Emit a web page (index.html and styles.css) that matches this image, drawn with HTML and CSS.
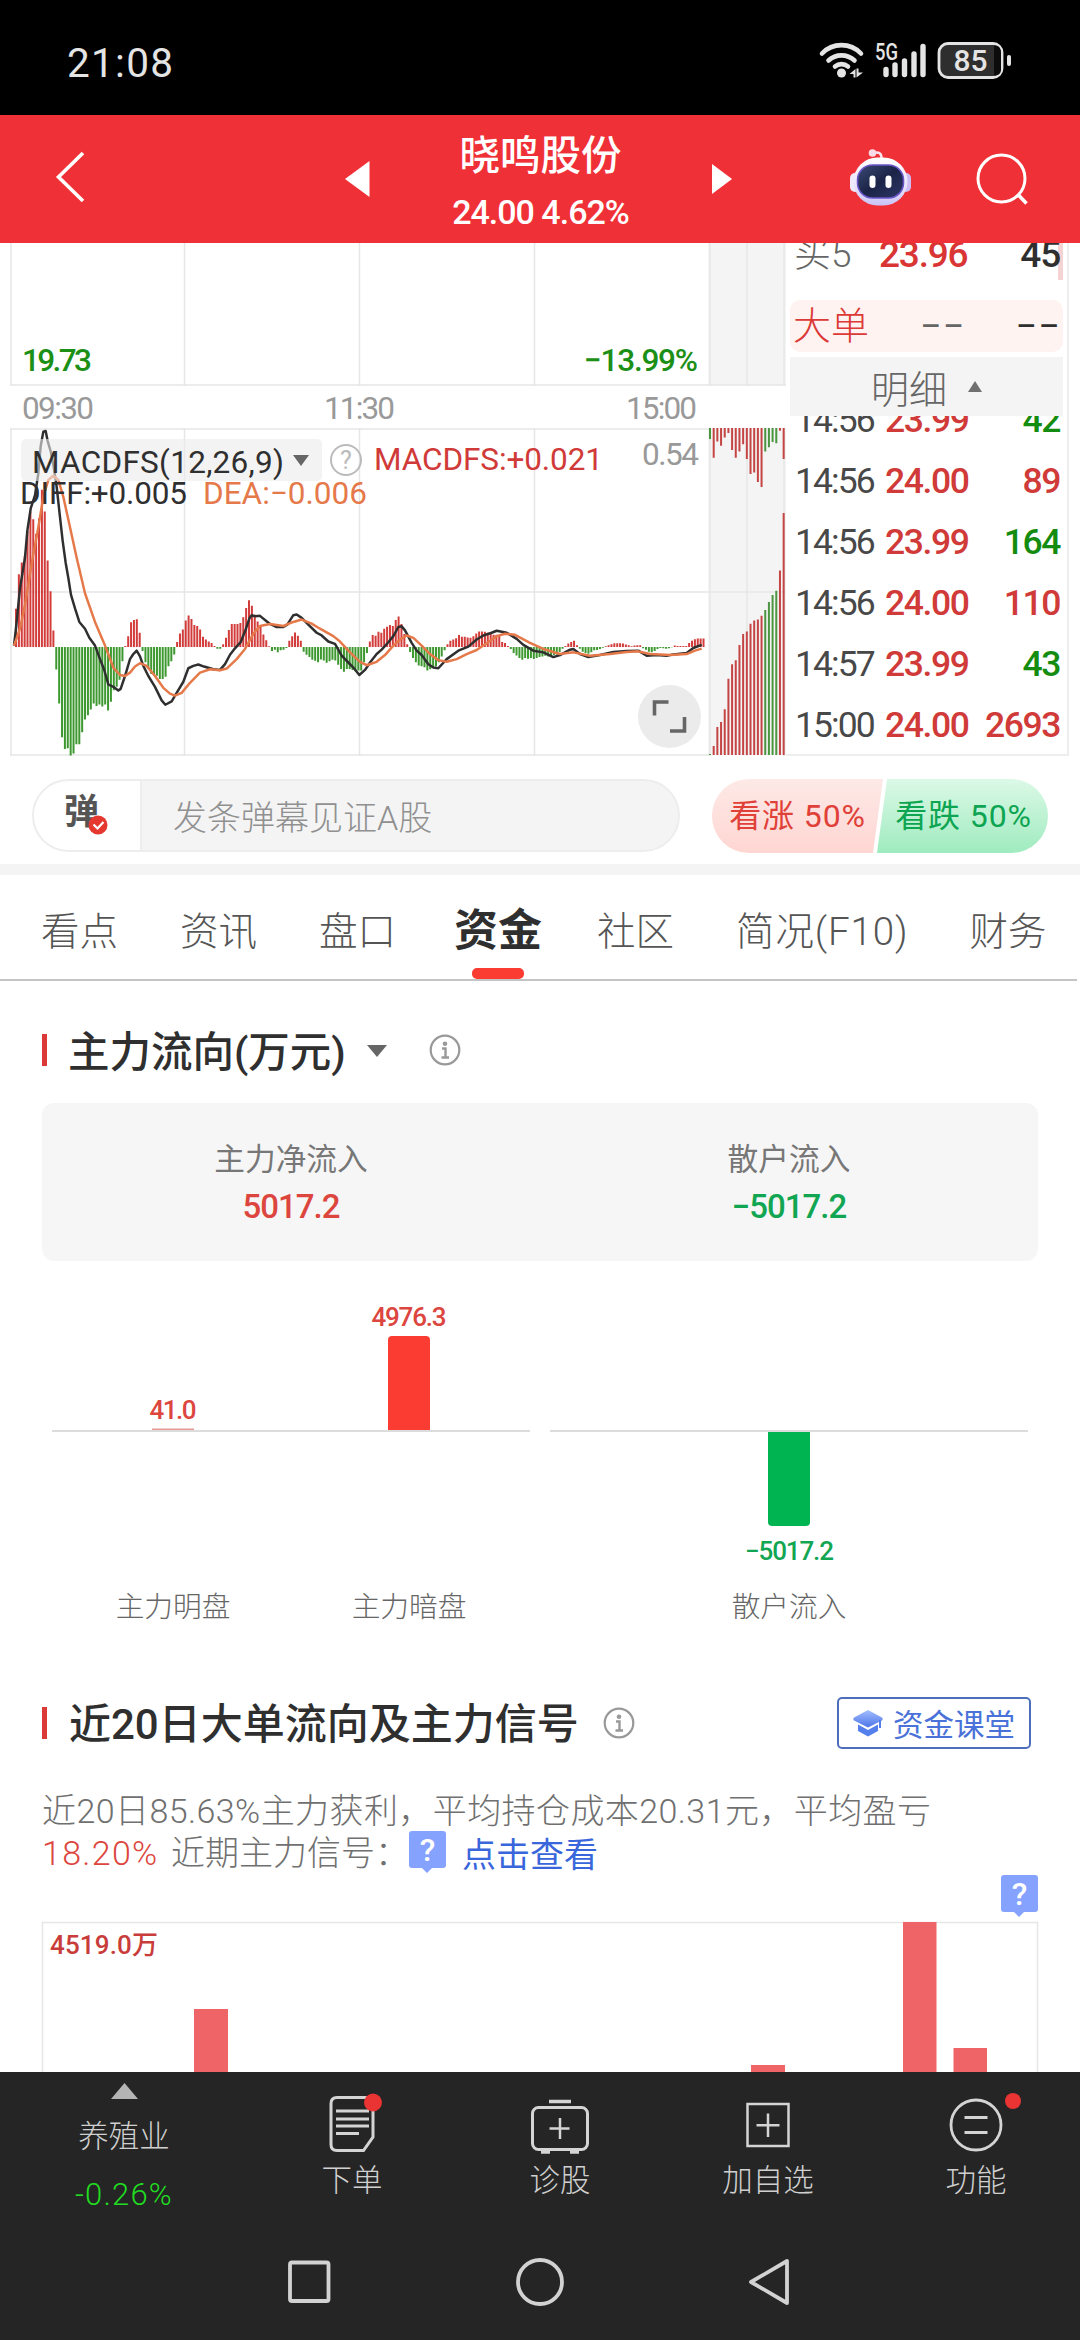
FILE: index.html
```html
<!DOCTYPE html>
<html lang="zh-CN">
<head>
<meta charset="utf-8">
<title>晓鸣股份</title>
<link rel="stylesheet" href="styles.css">
</head>
<body>
<div class="screen">
  <div class="status">
    <span class="clock">21:08</span>
    <svg class="status-icons" width="198" height="44" viewBox="0 0 198 44">
      <g fill="none" stroke="#e4e4e4" stroke-width="4.6" stroke-linecap="round">
        <path d="M4 13.500a27 27 0 0 1 39 0M10.500 20.500a19 19 0 0 1 26 0M17 26.500a10 10 0 0 1 13 0"/>
      </g>
      <circle cx="23.500" cy="33" r="4.500" fill="#e4e4e4"/>
      <path d="M31.500 34l6-5v8.500h-2v-3.500zM45 32.500l-6.500 5v-9h2v4z" fill="#e4e4e4"/>
      <text x="57" y="20" class="net" textLength="23" lengthAdjust="spacingAndGlyphs">5G</text>
      <g stroke="#e4e4e4" stroke-width="5.400" stroke-linecap="round">
        <path d="M68 34.500V29.500M77 34.500V25M86.500 34.500V21M96 34.500V14M105 34.500V6.500"/>
      </g>
      <rect x="121" y="3.500" width="63" height="34" rx="9" fill="#2e2e2e" stroke="#e4e4e4" stroke-width="2.800"/>
      <path d="M176 5.500h2q5 1 5 7v17q0 5-5 6h-2z" fill="#0c0c0c"/>
      <text x="135.500" y="31" class="batt" textLength="34" lengthAdjust="spacingAndGlyphs">85</text>
      <rect x="189" y="15" width="4" height="11" rx="2" fill="#e4e4e4"/>
    </svg>
  </div>

  <div class="header">
    <svg class="back" width="40" height="60" viewBox="0 0 40 60"><path d="M32 6L7.500 30 32 54" fill="none" stroke="#fff" stroke-width="3.600"/></svg>
    <svg class="prev" width="26" height="36" viewBox="0 0 26 36"><path d="M0 18L24.500 0v36z" fill="#fff"/></svg>
    <div class="title">
      <div class="name">晓鸣股份</div>
      <div class="price">24.00 4.62%</div>
    </div>
    <svg class="next" width="20" height="30" viewBox="0 0 20 30"><path d="M20 15L0 0v30z" fill="#fff"/></svg>
    <svg class="robot" width="62" height="58" viewBox="0 0 62 58">
      <defs>
        <linearGradient id="head" x1="0" y1="0" x2="0" y2="1"><stop offset="0" stop-color="#fff"/><stop offset=".6" stop-color="#e9e2fb"/><stop offset="1" stop-color="#c9c3f6"/></linearGradient>
        <linearGradient id="face" x1="0" y1="0" x2="1" y2="1"><stop offset="0" stop-color="#3c4a76"/><stop offset=".5" stop-color="#1b2447"/><stop offset="1" stop-color="#2d3766"/></linearGradient>
      </defs>
      <path d="M24 5q8-2 7.500 6" fill="none" stroke="#fbe3ee" stroke-width="2.500"/>
      <circle cx="22.500" cy="5" r="3.800" fill="#fbdce6"/>
      <rect x="0" y="25" width="10" height="19" rx="5" fill="#eeeafc"/>
      <rect x="51" y="25" width="10" height="19" rx="5" fill="#cdbdf2"/>
      <rect x="3.500" y="9.500" width="54" height="48" rx="24" fill="url(#head)"/>
      <rect x="7.500" y="17" width="46" height="33" rx="15" fill="url(#face)" stroke="#6a56c8" stroke-width="1.500"/>
      <rect x="19.500" y="27.500" width="6" height="12.500" rx="3" fill="#fff"/>
      <rect x="35.500" y="27.500" width="6" height="12.500" rx="3" fill="#fff"/>
    </svg>
    <svg class="search" width="54" height="54" viewBox="0 0 54 54"><circle cx="25.500" cy="25.500" r="23.500" fill="none" stroke="#fff" stroke-width="3"/><path d="M41.500 41l9 9.500" stroke="#fff" stroke-width="3.600"/></svg>
  </div>

  <div class="quote">
    <svg class="chart" width="786" height="517" viewBox="0 243 786 517">
      <rect x="708" y="243" width="78" height="142" fill="#f4f4f4"/>
      <rect x="708" y="428" width="78" height="327" fill="#f4f4f4"/>
      <g stroke="#e6e6e6" stroke-width="1.500" fill="none">
        <path d="M11 243V385M184.500 243V386M359.500 243V386M534.500 243V386M710 243V386M747 243V386M784 243V386M10 385H786"/>
        <path d="M11 428V756M184.500 428V756M359.500 428V756M534.500 428V756M710 428V756M747 428V756M784 428V756M10 429H709M10 592H786M10 755H709"/>
      </g>
      <text x="22" y="371" textLength="70" class="g">19.73</text>
      <text x="584" y="371" textLength="114" class="g">−13.99%</text>
      <text x="22" y="419" textLength="72" class="t">09:30</text>
      <text x="324" y="419" textLength="71" class="t">11:30</text>
      <text x="626" y="419" textLength="71" class="t">15:00</text>
      <g transform="translate(0 240) scale(.33333 .338)">
        <path id="macd-up" stroke="#d23c3b" stroke-width="6" fill="none"/>
        <path id="macd-down" stroke="#3d982f" stroke-width="6" fill="none"/>
        <path id="side-up" stroke="#c44544" stroke-width="6" fill="none"/>
        <path id="side-down" stroke="#4b9541" stroke-width="6" fill="none"/>
        <g fill="none" stroke-width="7.400" stroke-linejoin="round">
          <polyline stroke="#2f2f2f" points="42,1200 50,1130 60,1030 75,940 82,860 92,795 105,755 115,690 122,610 130,567 137,565 143,595 152,625 160,665 170,730 180,820 188,890 197,955 205,1000 213,1050 225,1090 238,1130 255,1150 268,1177 285,1200 300,1240 312,1270 325,1315 340,1322 355,1333 362,1328 375,1290 390,1240 400,1225 410,1215 420,1232 430,1260 445,1290 465,1322 485,1362 496,1375 515,1365 530,1340 550,1307 565,1267 580,1260 595,1256 612,1262 640,1270 660,1272 675,1255 690,1227 705,1208 722,1190 738,1150 748,1120 755,1110 765,1113 780,1112 795,1124 810,1136 830,1145 850,1145 862,1138 880,1110 890,1108 905,1118 925,1138 950,1162 965,1170 985,1188 1005,1195 1025,1230 1045,1250 1060,1265 1078,1287 1095,1272 1110,1250 1130,1225 1145,1212 1165,1190 1180,1172 1195,1145 1205,1143 1215,1155 1235,1192 1250,1215 1265,1228 1285,1255 1300,1265 1315,1267 1340,1240 1375,1215 1405,1203 1430,1182 1450,1170 1475,1162 1490,1156 1520,1162 1550,1180 1570,1198 1600,1215 1630,1220 1660,1234 1680,1228 1710,1212 1720,1210 1740,1225 1765,1234 1800,1228 1840,1219 1880,1216 1915,1215 1940,1230 1970,1228 2000,1230 2020,1226 2060,1222 2080,1207 2105,1198"/>
          <polyline stroke="#e5794a" points="42,1200 60,1150 75,1080 88,1000 100,930 115,850 130,760 145,710 160,697 175,710 190,760 210,850 230,940 255,1045 285,1130 315,1200 340,1265 360,1287 375,1290 390,1280 405,1262 420,1252 440,1260 465,1290 490,1325 510,1342 525,1348 545,1340 570,1310 600,1280 630,1270 660,1273 680,1268 710,1240 735,1210 760,1165 780,1142 810,1136 850,1142 880,1130 905,1123 935,1135 960,1150 1000,1172 1020,1188 1050,1220 1080,1248 1100,1258 1130,1248 1155,1228 1180,1200 1200,1182 1220,1170 1240,1177 1265,1200 1290,1225 1315,1243 1340,1248 1370,1240 1400,1225 1430,1213 1460,1193 1490,1172 1515,1165 1545,1168 1590,1192 1630,1210 1680,1225 1720,1220 1770,1230 1830,1225 1880,1219 1915,1217 1950,1225 2010,1228 2060,1225 2085,1215 2105,1209"/>
        </g>
      </g>
      <rect x="21" y="439" width="301" height="42" rx="5" fill="#ebebeb" fill-opacity=".6"/>
      <text x="32" y="473" textLength="252" class="k">MACDFS(12,26,9)</text>
      <path d="M293 455h16l-8 11z" fill="#666"/>
      <circle cx="346" cy="460" r="15" fill="none" stroke="#bbb" stroke-width="2"/>
      <text x="346" y="469" text-anchor="middle" class="q">?</text>
      <text x="374" y="470" textLength="229" class="r">MACDFS:+0.021</text>
      <text x="642" y="465" textLength="57" class="t">0.54</text>
      <text x="20" y="504" textLength="167" class="k">DIFF:+0.005</text>
      <text x="203" y="504" textLength="164" class="o">DEA:−0.006</text>
      <circle cx="669.500" cy="716.500" r="31.500" fill="#ebebeb"/>
      <path d="M668.500 702h-14v13.500M670 731h14.500v-14" fill="none" stroke="#666" stroke-width="3.600"/>
    </svg>
    <div class="book">
      <div class="depth"><i></i><span class="lab">买5</span><b>23.96</b><em>45</em></div>
      <div class="big"><span>大单</span><b>−−</b><em>−−</em></div>
      <div class="detail"><span>明细</span><svg width="14" height="11" viewBox="0 0 14 11"><path d="M7 0l7 11H0z" fill="#707070"/></svg></div>
      <div class="ticks">
        <div class="tick first"><span>14:56</span><b>23.99</b><em class="dn">42</em></div>
        <div class="tick"><span>14:56</span><b>24.00</b><em>89</em></div>
        <div class="tick"><span>14:56</span><b>23.99</b><em class="dn">164</em></div>
        <div class="tick"><span>14:56</span><b>24.00</b><em>110</em></div>
        <div class="tick"><span>14:57</span><b>23.99</b><em class="dn">43</em></div>
        <div class="tick"><span>15:00</span><b>24.00</b><em>2693</em></div>
      </div>
    </div>
  </div>

  <div class="barrage">
    <div class="input">
      <div class="toggle"><span>弹</span><svg width="20" height="20" viewBox="0 0 20 20"><circle cx="10" cy="10" r="9.500" fill="#e5392f"/><path d="M5.500 9.500l4 4 6-6.500" fill="none" stroke="#fff" stroke-width="2.200"/></svg></div>
      <div class="hint">发条弹幕见证A股</div>
    </div>
    <div class="vote"><span class="rise">看涨 50%</span><span class="fall">看跌 50%</span></div>
  </div>
  <div class="band"></div>

  <div class="tabs">
    <span>看点</span><span>资讯</span><span>盘口</span><span class="on">资金</span><span>社区</span><span class="brief">简况(F10)</span><span>财务</span>
  </div>

  <div class="sec sec1">
    <i class="mark"></i><h2>主力流向(万元)</h2>
    <svg class="caret" width="20" height="12" viewBox="0 0 20 12"><path d="M0 0h20L10 12z" fill="#666"/></svg>
    <svg class="info" width="32" height="32" viewBox="0 0 32 32"><circle cx="16" cy="16" r="14.300" fill="none" stroke="#999" stroke-width="2.200"/><circle cx="16" cy="9.800" r="2.300" fill="#999"/><path d="M13 14.500h3.500v8.500M12.500 23.500h7.500" fill="none" stroke="#999" stroke-width="2.400"/></svg>
  </div>
  <div class="card">
    <div><p>主力净流入</p><b class="up">5017.2</b></div>
    <div><p>散户流入</p><b class="down">−5017.2</b></div>
  </div>
  <svg class="flow" width="1080" height="432" viewBox="0 1261 1080 432">
    <path d="M52 1431H530M550 1431H1028" stroke="#dcdcdc" stroke-width="2"/>
    <path d="M152 1429.300h42" stroke="#e59a94" stroke-width="1.500"/>
    <path d="M388 1430v-90q0-4 4-4h34q4 0 4 4v90z" fill="#fa3c32"/>
    <path d="M768 1432v90q0 4 4 4h34q4 0 4-4v-90z" fill="#00b551"/>
    <text x="173" y="1419" textLength="47" text-anchor="middle" class="v up">41.0</text>
    <text x="409" y="1326" textLength="75" text-anchor="middle" class="v up">4976.3</text>
    <text x="789.500" y="1560" textLength="89" text-anchor="middle" class="v down">−5017.2</text>
    <text x="173" y="1616.500" text-anchor="middle" class="l">主力明盘</text>
    <text x="409" y="1616.500" text-anchor="middle" class="l">主力暗盘</text>
    <text x="789" y="1616.500" text-anchor="middle" class="l">散户流入</text>
  </svg>

  <div class="sec sec2">
    <i class="mark"></i><h2>近20日大单流向及主力信号</h2>
    <svg class="info" width="32" height="32" viewBox="0 0 32 32"><circle cx="16" cy="16" r="14.300" fill="none" stroke="#999" stroke-width="2.200"/><circle cx="16" cy="9.800" r="2.300" fill="#999"/><path d="M13 14.500h3.500v8.500M12.500 23.500h7.500" fill="none" stroke="#999" stroke-width="2.400"/></svg>
    <div class="course">
      <svg width="30" height="27" viewBox="0 0 30 27"><defs><linearGradient id="cap" x1="0" y1="0" x2="0" y2="1"><stop offset="0" stop-color="#a3bdff"/><stop offset="1" stop-color="#4c76e8"/></linearGradient></defs><path d="M15 0l14 7.500q1.500 1.500 0 3L15 17.500 1 10.500q-1.500-1.500 0-3z" fill="url(#cap)"/><path d="M5 14.500l10 5.500 10-5.500v6.500l-10 5.500-10-5.500z" fill="#5580ec"/><path d="M27 10v8" stroke="#5580ec" stroke-width="2"/></svg>
      <span>资金课堂</span>
    </div>
  </div>
  <div class="desc">
    <div class="line1">近20日85.63%主力获利，平均持仓成本20.31元，平均盈亏</div>
    <div class="line2"><span class="pct">18.20%</span><span class="recent">近期主力信号：</span><span class="ask">?</span><a>点击查看</a></div>
  </div>
  <div class="askrow"><span class="ask">?</span></div>
  <svg class="days" width="1080" height="156" viewBox="0 1916 1080 156">
    <path d="M42.500 2080V1922.500H1037.500V2080" fill="none" stroke="#e6e6e6" stroke-width="1.500"/>
    <g fill="#ef6466"><rect x="194" y="2009" width="34" height="70"/><rect x="751" y="2065" width="34" height="20"/><rect x="903" y="1922" width="33.500" height="160"/><rect x="953.500" y="2048" width="33.500" height="30"/></g>
    <text x="50" y="1954" textLength="108" class="amt">4519.0万</text>
  </svg>

  <div class="dock">
    <div class="actions">
      <div class="index"><svg width="27" height="16" viewBox="0 0 27 16"><path d="M13.500 0L27 16H0z" fill="#b4b4b4"/></svg><span>养殖业</span><span class="chg">-0.26%</span></div>
      <div class="act"><svg width="62" height="62" viewBox="0 0 62 62"><g fill="none" stroke="#d4d4d4" stroke-width="3"><path d="M13 4.500h30q6 0 6 6V44L39.500 57.500H13q-6 0-6-6V10.500q0-6 6-6z" transform="translate(3)"/><path d="M15 18h33M15 26h33M15 33h33M15 40.500h23"/></g><circle cx="52" cy="9.500" r="9" fill="#e93433"/></svg><span>下单</span></div>
      <div class="act"><svg width="62" height="62" viewBox="0 0 62 62"><g fill="none" stroke="#d4d4d4" stroke-width="3"><rect x="3.500" y="14.500" width="55" height="42" rx="6"/><path d="M20 8.500h22M12 59h9M41 59h9" stroke-width="3.500"/><path d="M31 25v21M20.500 35.500h20" stroke-width="2.500"/></g></svg><span>诊股</span></div>
      <div class="act"><svg width="62" height="62" viewBox="0 0 62 62"><g fill="none" stroke="#d4d4d4" stroke-width="2.500"><rect x="10.500" y="11" width="41" height="42"/><path d="M31 20.500v23.500M19.500 32.300h23"/></g></svg><span>加自选</span></div>
      <div class="act"><svg width="62" height="62" viewBox="0 0 62 62"><g fill="none" stroke="#d4d4d4" stroke-width="2.800"><circle cx="31" cy="32" r="25"/><path d="M19.500 24.500h23M19.500 39.500h23"/></g></svg><i class="dot"></i><span>功能</span></div>
    </div>
    <svg class="nav" width="1080" height="60" viewBox="0 2252 1080 60">
      <g fill="none" stroke="#d2d2d2" stroke-width="3.800" stroke-linejoin="round"><rect x="290" y="2262.500" width="38.500" height="38.500" rx="2"/><circle cx="540" cy="2282" r="22"/><path d="M751 2282L787 2261v42z"/></g>
    </svg>
  </div>
</div>
<script src="chart.js"></script>
</body>
</html>
```
FILE: styles.css
```css
* { box-sizing: border-box; }
body { margin: 0; background: #fff; font-family: Roboto, "Noto Sans CJK SC", sans-serif; color: #2f2f2f; }
i, em { font-style: normal; }
h2, p { margin: 0; }
svg { display: block; flex: none; }
.screen { width: 1080px; height: 2340px; display: flex; flex-direction: column; overflow: hidden; }
.screen > * { flex: none; }

.status { height: 115px; background: #000; display: flex; justify-content: space-between; align-items: flex-start; padding: 39px 64px 0 67px; }
.clock { font-size: 40.500px; line-height: 48px; color: #e4e4e4; letter-spacing: 1.300px; }
.status-icons { margin-top: 1px; }
.net { font-size: 23px; font-weight: 500; fill: #e4e4e4; }
.batt { font-size: 30px; font-weight: 500; fill: #e4e4e4; }

.header { height: 128px; background: #f03037; display: flex; align-items: center; padding-left: 51px; color: #fff; }
.back { margin-bottom: 4px; }
.prev { margin-left: 254px; }
.title { width: 343px; text-align: center; display: flex; flex-direction: column; align-items: center; margin-left: -2px; }
.name { font-size: 40.500px; line-height: 56px; font-weight: 500; padding-top: 2px; }
.price { font-size: 34px; line-height: 40px; font-weight: 500; letter-spacing: -1px; margin-top: 8px; }
.robot { margin-left: 118px; margin-bottom: 5px; }
.search { margin-left: 64px; margin-top: 1px; }

.quote { height: 517px; display: flex; }
.chart text { font-size: 31.500px; font-weight: 400; }
.chart .g { fill: #1c8f16; font-weight: 500; }
.chart .t { fill: #999; }
.chart .k { fill: #2f2f2f; }
.chart .q { fill: #bbb; font-size: 25px; }
.chart .r { fill: #d03a38; }
.chart .o { fill: #e5794a; }
.book { width: 283px; height: 513px; padding: 0 4px; border-right: 2px solid #eee; border-bottom: 2px solid #eee; overflow: hidden; font-size: 35.500px; }
.book b, .book em { font-weight: 500; letter-spacing: -1.200px; white-space: nowrap; }
.book em { margin-left: auto; text-align: right; }
.depth { height: 57px; display: flex; align-items: flex-start; padding: 0 3px 0 4px; position: relative; }
.depth > * { line-height: 44px; margin-top: -10px; }
.depth i { position: absolute; right: 0; top: 0; width: 5px; height: 37px; margin: 0; background: #f6d3d3; }
.depth .lab { color: #666; font-size: 37px; font-weight: 300; width: 85px; }
.depth b { color: #d93534; font-size: 37px; }
.depth em { font-size: 37px; position: relative; }
.big { height: 52px; line-height: 52px; background: #fff3f2; border-radius: 10px; display: flex; padding: 0 2px 0 3px; font-size: 38px; font-weight: 300; color: #dc3a36; }
.big b { margin-left: 51px; color: #666; letter-spacing: 1px; font-weight: 400; }
.big em { letter-spacing: 1px; font-weight: 400; color: #2f2f2f; }
.detail { margin-top: 5px; height: 59px; background: #f4f4f4; display: flex; align-items: center; justify-content: center; gap: 21px; color: #666; font-size: 38px; font-weight: 300; padding: 7px 0 0; }
.detail span { line-height: 52px; }
.detail svg { margin-bottom: 8px; }
.ticks { overflow: hidden; }
.tick { height: 61px; line-height: 61px; display: flex; padding: 0 3px 0 5px; }
.tick.first { margin-top: -26px; }
.tick span { width: 90px; color: #484848; letter-spacing: -1.900px; font-weight: 400; }
.tick b, .tick em { color: #d03a38; letter-spacing: -1.400px; }
.tick .dn { color: #148c10; }

.barrage { height: 104px; padding: 19px 32px 0; display: flex; justify-content: space-between; }
.input { width: 648px; height: 73px; border: 2px solid #ededed; border-radius: 37px; background: #f4f4f4; display: flex; overflow: hidden; }
.toggle { width: 108px; background: #fff; border-right: 2px solid #ededed; position: relative; padding-left: 30px; font-size: 35px; font-weight: 700; line-height: 64px; color: #555; }
.toggle svg { position: absolute; left: 54px; top: 34px; }
.hint { padding-left: 31px; font-size: 34px; line-height: 75px; font-weight: 300; color: #909090; }
.vote { width: 336px; height: 74px; border-radius: 37px; overflow: hidden; position: relative; display: flex; font-size: 32px; letter-spacing: .9px; line-height: 75px; text-align: center; }
.rise { width: 171px; color: #e04038; background: linear-gradient(#fde9e7, #ffd6d2); clip-path: polygon(0 0, 100% 0, 161px 100%, 0 100%); margin-right: -6px; }
.fall { width: 171px; color: #0da552; background: linear-gradient(#dcf9e7, #9febbf); clip-path: polygon(10px 0, 100% 0, 100% 100%, 0 100%); padding-left: 2px; }
.band { height: 11px; background: #f4f4f4; }

.tabs { height: 106px; margin-right: 3px; border-bottom: 2px solid #c4c4c4; display: flex; gap: 62px; padding-left: 41px; font-size: 38.500px; line-height: 113px; font-weight: 300; color: #555; white-space: nowrap; }
.tabs .on { position: relative; margin: 0 -7px 0 -4px; font-size: 44px; font-weight: 700; color: #2f2f2f; }
.tabs .brief { letter-spacing: .9px; margin-right: -1px; }
.tabs .on::after { content: ""; position: absolute; left: 18px; bottom: 0; width: 52px; height: 11px; border-radius: 5px; background: #fa3c32; }

.sec { height: 60px; display: flex; align-items: center; padding: 0 49px 0 42px; }
.sec1 { margin-top: 39px; }
.mark { width: 5px; height: 32px; background: #dc3a38; }
h2 { margin-left: 22px; font-size: 42px; line-height: 60px; font-weight: 500; padding-top: 4px; white-space: nowrap; }
.sec1 h2 { font-size: 41.500px; padding-top: 5px; margin-left: 21px; }
.caret { margin-left: 21px; margin-top: 2px; }
.info { margin-left: 42px; }
.sec2 .info { margin-left: 24px; }
.card { margin: 23px 42px 0; height: 158px; border-radius: 12px; background: #f6f6f6; display: flex; padding: 32px 0 0; text-align: center; }
.card div { width: 50%; }
.card p { font-size: 30.700px; line-height: 50px; color: #777; }
.card b { display: block; font-size: 33px; line-height: 43px; font-weight: 500; letter-spacing: -1px; }
.up { color: #dc463e; fill: #dc463e; }
.down { color: #12a653; fill: #12a653; }
.v { font-size: 26px; font-weight: 500; }
.l { font-size: 28.700px; fill: #666; font-weight: 300; }

.course { margin-left: auto; width: 194px; height: 52px; border: 2px solid #4d6fbb; border-radius: 5px; display: flex; align-items: center; justify-content: center; gap: 10px; color: #4a72d8; font-size: 30.500px; }
.desc { margin: 36px 0 0 42px; height: 86px; font-size: 34px; line-height: 43px; font-weight: 300; color: #707070; white-space: nowrap; }
.line1 { letter-spacing: .42px; padding-top: 1px; height: 43px; }
.line2 { display: flex; height: 43px; }
.pct { color: #dc463e; width: 129px; letter-spacing: 1.300px; }
.recent { width: 239px; }
.ask { position: relative; width: 37px; height: 37px; border-radius: 3px; background: #86a2ff; color: #fff; font-size: 32px; font-weight: 500; line-height: 39px; text-align: center; }
.ask::after { content: ""; position: absolute; left: 13px; top: 37px; border: 5px solid transparent; border-top-color: #86a2ff; border-bottom: 0; }
.desc .ask { margin: -1px 16px 0 -1px; }
.desc a { color: #3a66dc; line-height: 46px; font-weight: 400; }
.askrow { display: flex; justify-content: flex-end; padding-right: 42px; height: 41px; }
.amt { font-size: 26px; fill: #c83c3a; font-weight: 500; }

.dock { height: 268px; background: #252525; color: #d0d0d0; font-size: 30.500px; font-weight: 300; }
.actions { height: 180px; display: grid; grid-template-columns: 248px repeat(4, 208px); }
.index, .act { display: flex; flex-direction: column; align-items: center; }
.index svg { margin-top: 11px; }
.index span { line-height: 50px; margin-top: 13px; }
.index .chg { color: #21dd21; margin-top: 8px; font-size: 31px; letter-spacing: 1.200px; }
.act { position: relative; padding-top: 21px; }
.act span { line-height: 48px; margin-top: 2px; }
.dot { position: absolute; left: 133px; top: 21px; width: 16px; height: 16px; border-radius: 50%; background: #e93433; }
```
FILE: chart.js
```js
// MACD histogram, one value per trading minute, in chart units.
const macd = [113,215,250,268,343,400,378,335,381,465,401,256,165,49,-67,-167,-267,-302,-300,-321,-315,-288,-288,-252,-215,-202,-185,-167,-175,-170,-176,-170,-188,-162,-128,-118,-97,-42,3,32,73,80,82,42,-12,-45,-65,-80,-85,-85,-95,-95,-88,-57,-42,-22,15,40,52,78,93,83,65,62,52,30,22,16,12,3,-5,-5,8,27,50,68,68,68,71,88,115,138,122,95,75,60,37,20,2,-12,-8,-16,-10,-8,-3,18,32,43,33,18,-14,-23,-30,-38,-41,-45,-37,-40,-47,-42,-38,-40,-53,-65,-73,-65,-65,-68,-72,-70,-70,-45,-18,16,35,33,45,42,54,60,65,62,80,90,68,38,8,-15,-33,-45,-55,-57,-60,-70,-66,-62,-57,-45,-28,-10,8,18,22,26,35,30,30,28,27,32,40,46,46,45,42,38,36,36,34,15,12,3,-6,-18,-25,-33,-38,-33,-35,-33,-36,-33,-30,-28,-26,-28,-26,-24,-22,-15,-5,3,10,15,18,5,-5,-14,-18,-20,-16,-10,-9,-6,-2,2,5,8,11,11,11,10,7,5,2,4,5,5,-4,-8,-14,-16,-12,-6,-3,-4,-5,-4,-1,4,3,3,3,3,12,18,23,25,25,25];
// Call auction volume: [hanging length, top of the rising bar, falling?]
const side = [[33,1521,1],[88,1497,0],[40,1441,0],[53,1426,0],[28,1388,0],[15,1298,0],[65,1255,0],[88,1243,0],[70,1198,0],[48,1166,0],[92,1158,0],[136,1135,0],[132,1126,0],[160,1123,0],[175,1112,0],[70,1095,1],[57,1071,1],[42,1050,1],[45,1038,1],[8,978,0],[92,808,0]];

let up = "", down = "", sideUp = "", sideDown = "";
macd.forEach((v, i) => {
  const seg = `M${(48 + i * 8.63).toFixed(1)} 1204V${1204 - v}`;
  if (v > 0) up += seg; else down += seg;
});
side.forEach(([h, top, falling], i) => {
  const x = (2130 + i * 11.05).toFixed(1);
  const seg = `M${x} 556v${h}M${x} 1524V${top}`;
  if (falling) sideDown += seg; else sideUp += seg;
});
document.getElementById("macd-up").setAttribute("d", up);
document.getElementById("macd-down").setAttribute("d", down);
document.getElementById("side-up").setAttribute("d", sideUp);
document.getElementById("side-down").setAttribute("d", sideDown);
```
